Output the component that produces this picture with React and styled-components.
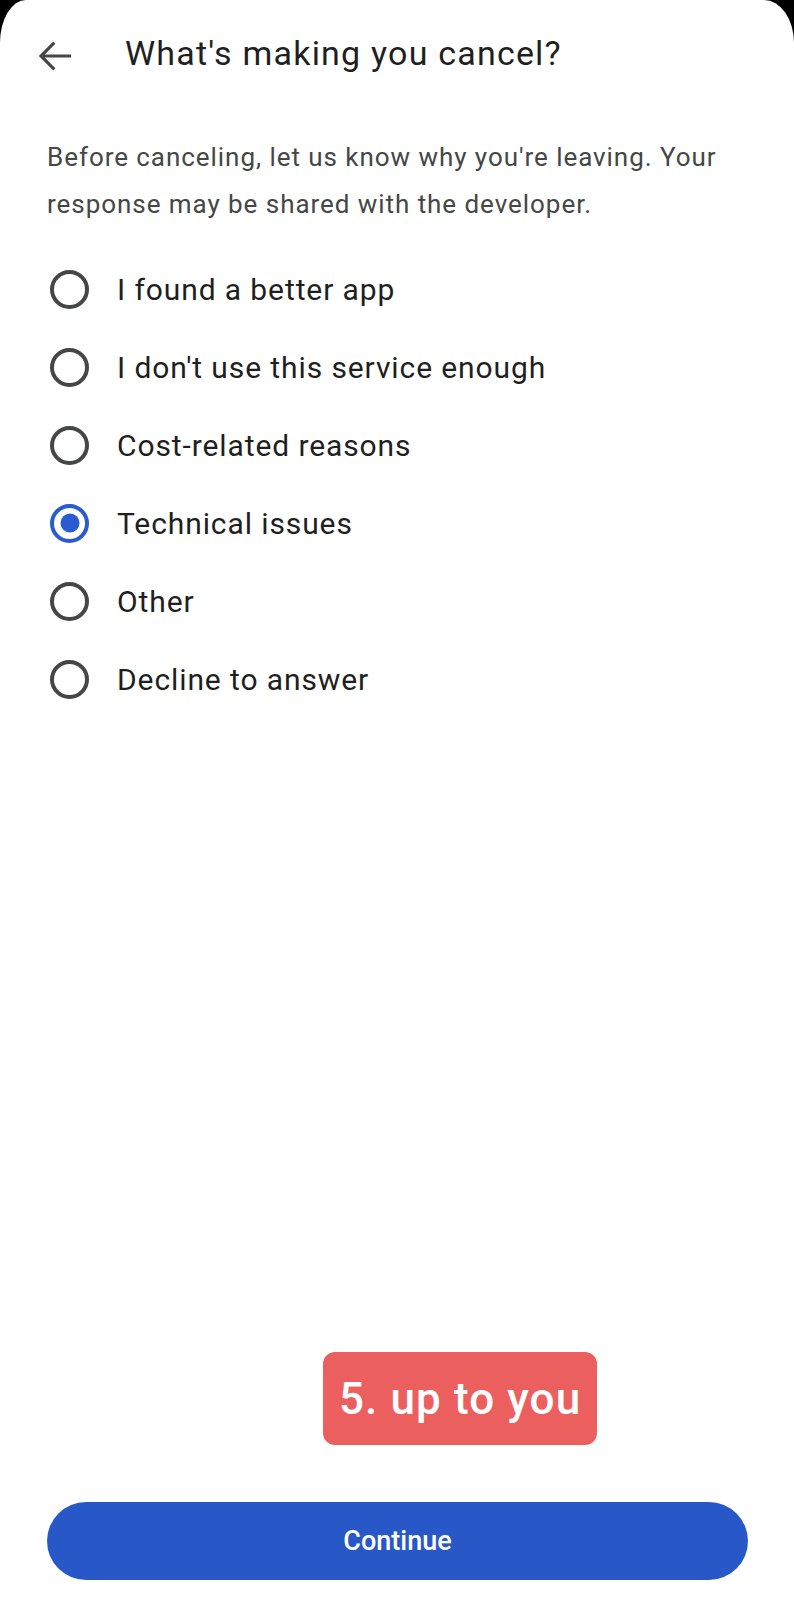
import React, { useState } from 'react';
import styled, { createGlobalStyle } from 'styled-components';

const GlobalStyle = createGlobalStyle`
  * {
    box-sizing: border-box;
  }
  body {
    margin: 0;
    background: #000;
    font-family: Roboto, 'Liberation Sans', sans-serif;
  }
`;

const REASONS = [
  { id: 1, label: 'I found a better app' },
  { id: 2, label: "I don't use this service enough" },
  { id: 3, label: 'Cost-related reasons' },
  { id: 4, label: 'Technical issues' },
  { id: 5, label: 'Other' },
  { id: 6, label: 'Decline to answer' },
];

const App = () => {
  const [selected, setSelected] = useState(4);
  return (
    <>
      <GlobalStyle />
      <Sheet>
        <Header>
          <BackButton aria-label="Back">
            <svg width="48" height="48" viewBox="0 0 24 24" fill="#444746">
              <path d="M20 11.2H6.9l5.3-5.3L11.1 4.8 3.9 12l7.2 7.2 1.1-1.1-5.3-5.3H20z" />
            </svg>
          </BackButton>
          <Title>What's making you cancel?</Title>
        </Header>
        <Description>
          Before canceling, let us know why you're leaving. Your response may be shared with the developer.
        </Description>
        <OptionList>
          {REASONS.map(({ id, label }) => (
            <Option key={id} onClick={() => setSelected(id)}>
              <Radio $checked={selected === id} />
              <OptionText>{label}</OptionText>
            </Option>
          ))}
        </OptionList>
        <Footer>
          <Badge>5. up to you</Badge>
          <ContinueButton>Continue</ContinueButton>
        </Footer>
      </Sheet>
    </>
  );
};

const Sheet = styled.div`
  display: flex;
  flex-direction: column;
  min-height: 1600px;
  background: #fff;
  border-radius: 26px 30px 0 0 / 43px 43px 0 0;
`;

const Header = styled.div`
  display: flex;
  align-items: center;
  gap: 46px;
  padding: 32px 0 0 31px;
`;

const BackButton = styled.div`
  display: flex;
  width: 48px;
  height: 48px;
`;

const Title = styled.h1`
  margin: 0 0 6px;
  color: #1f1f1f;
  font-size: 34px;
  font-weight: 400;
  letter-spacing: 1.2px;
`;

const Description = styled.p`
  margin: 54px 40px 0 47px;
  color: #444746;
  font-size: 26px;
  line-height: 47px;
  letter-spacing: 0.95px;
`;

const OptionList = styled.div`
  display: flex;
  flex-direction: column;
  margin-top: 22px;
`;

const Option = styled.div`
  display: flex;
  align-items: center;
  gap: 28px;
  height: 78px;
  padding-left: 50px;
  cursor: pointer;
`;

const Radio = styled.span`
  position: relative;
  width: 39px;
  height: 39px;
  border-radius: 50%;
  border: 4px solid ${({ $checked }) => ($checked ? '#2a5bd0' : '#444746')};
  flex-shrink: 0;
  &::after {
    content: '';
    display: ${({ $checked }) => ($checked ? 'block' : 'none')};
    position: absolute;
    top: 50%;
    left: 50%;
    width: 19px;
    height: 19px;
    border-radius: 50%;
    background: #2a5bd0;
    transform: translate(-50%, -50%);
  }
`;

const OptionText = styled.span`
  color: #1f1f1f;
  font-size: 30px;
  letter-spacing: 0.9px;
`;

const Footer = styled.div`
  display: flex;
  flex-direction: column;
  margin-top: auto;
  padding: 0 46px 20px 47px;
`;

const Badge = styled.div`
  align-self: flex-start;
  margin-left: 276px;
  padding: 0 16px;
  height: 93px;
  display: flex;
  align-items: center;
  border-radius: 12px;
  background: #ec5f5f;
  color: #fff;
  font-size: 44px;
  font-weight: 500;
  letter-spacing: 1.1px;
`;

const ContinueButton = styled.button`
  margin-top: 57px;
  height: 78px;
  border: none;
  border-radius: 39px;
  background: #2858c8;
  color: #fff;
  font-family: Roboto, 'Liberation Sans', sans-serif;
  font-size: 27px;
  font-weight: 500;
  cursor: pointer;
`;

export default App;
